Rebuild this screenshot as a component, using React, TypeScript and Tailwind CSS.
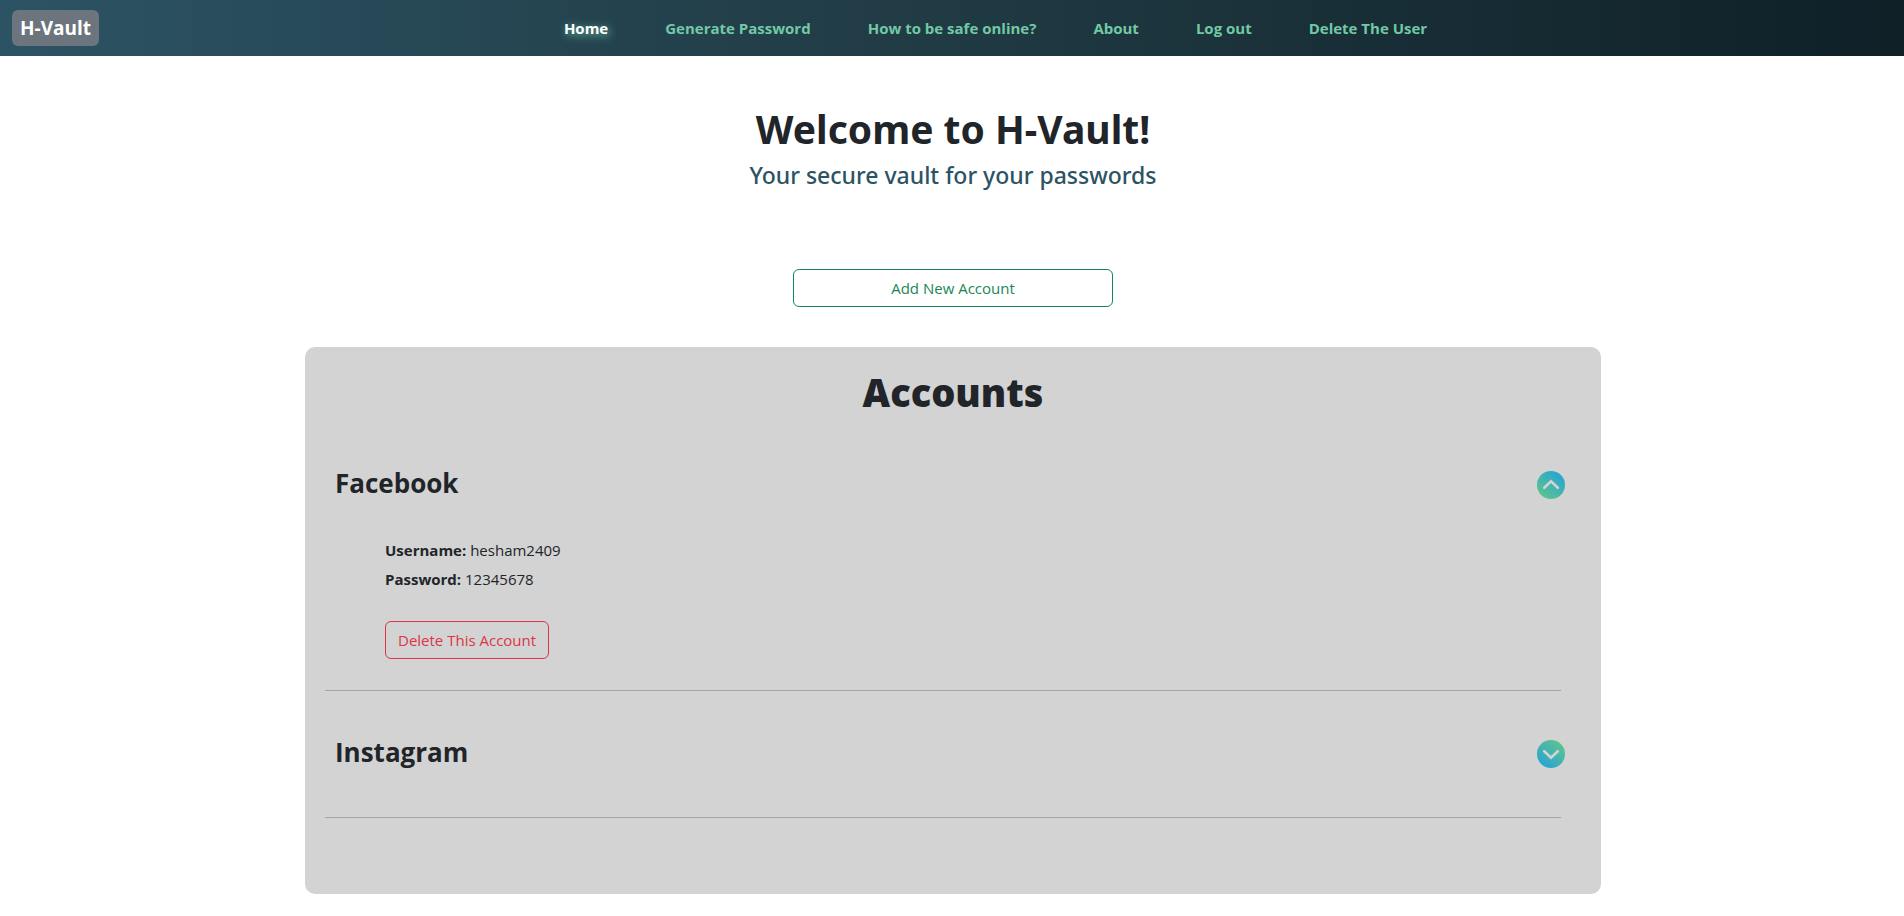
import { useState } from "react";

const links = [
  "Home",
  "Generate Password",
  "How to be safe online?",
  "About",
  "Log out",
  "Delete The User",
];

const accounts = [
  { name: "Facebook", username: "hesham2409", password: "12345678" },
  { name: "Instagram", username: "hesham2409", password: "12345678" },
];

function ToggleIcon({ open, id }: { open: boolean; id: string }) {
  return (
    <svg viewBox="0 0 28 28" className={open ? "size-7 rotate-180" : "size-7"} aria-hidden="true">
      <defs>
        <linearGradient id={id} x1="5" y1="24" x2="21" y2="3" gradientUnits="userSpaceOnUse">
          <stop offset="0" stopColor="#2aa6cf" />
          <stop offset="1" stopColor="#59c194" />
        </linearGradient>
      </defs>
      <circle cx="14" cy="14" r="14" fill={`url(#${id})`} />
      <path
        d="M7.2 11.2 14 17.8 20.8 11.2"
        fill="none"
        stroke="#d3d3d3"
        strokeWidth="2.6"
        strokeLinecap="round"
        strokeLinejoin="miter"
      />
    </svg>
  );
}

export default function App() {
  const [open, setOpen] = useState<Record<string, boolean>>({ Facebook: true });

  return (
    <div className="min-h-screen bg-white pb-5 font-['Open_Sans','Noto_Sans',sans-serif] text-base leading-6 text-[#212529]">
      <header className="flex h-14 items-center bg-linear-to-r from-[#2c5364] via-[#203a43] to-[#0f2027] px-3">
        <a href="#home" className="flex h-9 items-center rounded-md bg-[#6c757d] px-2 text-[19px] font-bold text-white">
          H-Vault
        </a>
        <nav className="flex flex-1 items-center justify-center gap-[57px] text-[15px] font-bold">
          {links.map((label, i) => (
            <a
              key={label}
              href="#"
              className={
                i === 0
                  ? "text-white [text-shadow:2px_2px_8px_#71c9a5]"
                  : "text-[#71c9a5]"
              }
            >
              {label}
            </a>
          ))}
        </nav>
      </header>

      <main className="flex flex-col items-center pr-3 pl-3.5">
        <h1 className="mt-[49px] font-['Noto_Sans','Open_Sans',sans-serif] text-[39px] leading-12 font-bold">
          Welcome to H-Vault!
        </h1>
        <p className="mt-2 font-['Noto_Sans','Open_Sans',sans-serif] text-[23px] leading-7 font-medium text-[#2c5364]">
          Your secure vault for your passwords
        </p>
        <button
          type="button"
          className="mt-20 h-[38px] w-80 rounded-md border border-[#198754] text-[15px] text-[#198754]"
        >
          Add New Account
        </button>

        <section className="mt-10 w-full max-w-[1296px] rounded-[10px] bg-[#d3d3d3] px-5 pt-[19px] pb-[76px]">
          <h2 className="mb-1 text-center font-['Noto_Sans','Open_Sans',sans-serif] text-[38px] leading-[52px] font-black">
            Accounts
          </h2>
          {accounts.map(({ name, username, password }) => (
            <article key={name} className="mr-5 border-b border-[#a4a5a6]">
              <div className="-mr-1 flex h-[126px] items-center justify-between pl-[10px]">
                <h3 className="pb-1 text-[26px] leading-9 font-bold">{name}</h3>
                <button
                  type="button"
                  aria-label={`Toggle ${name}`}
                  aria-expanded={!!open[name]}
                  onClick={() => setOpen({ ...open, [name]: !open[name] })}
                >
                  <ToggleIcon open={!!open[name]} id={`toggle-${name}`} />
                </button>
              </div>
              {open[name] && (
                <div className="-mt-3 pb-[31px] pl-[60px] text-[15px]">
                  <p className="leading-[29px]">
                    <b>Username:</b> {username}
                  </p>
                  <p className="leading-[29px]">
                    <b>Password:</b> {password}
                  </p>
                  <button
                    type="button"
                    className="mt-[27px] h-[38px] rounded-md border border-[#dc3545] px-3 text-[#dc3545]"
                  >
                    Delete This Account
                  </button>
                </div>
              )}
            </article>
          ))}
        </section>
      </main>
    </div>
  );
}
